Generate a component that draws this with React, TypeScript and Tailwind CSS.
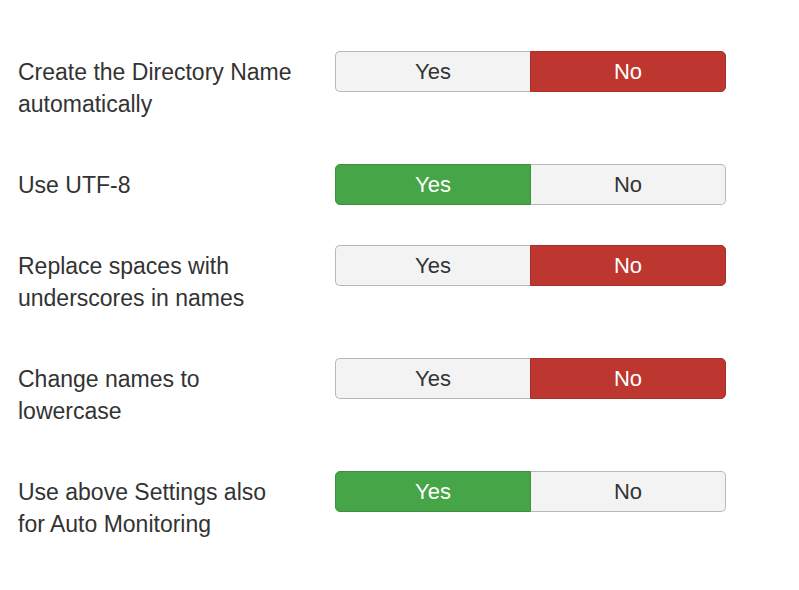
const rows = [
  { label: "Create the Directory Name automatically", value: false },
  { label: "Use UTF-8", value: true },
  { label: "Replace spaces with underscores in names", value: false },
  { label: "Change names to lowercase", value: false },
  { label: "Use above Settings also for Auto Monitoring", value: true },
];

function Toggle({ value }: { value: boolean }) {
  return (
    <div className="flex h-[41px] w-[391px] shrink-0 text-[22px] leading-none">
      <div
        className={`flex flex-1 items-center justify-center rounded-l-[5px] border ${
          value
            ? "border-[#3d8f3d] bg-[#46a546] text-white"
            : "border-[#b8b8b8] border-r-0 bg-[#f3f3f3] text-[#333]"
        }`}
      >
        Yes
      </div>
      <div
        className={`flex flex-1 items-center justify-center rounded-r-[5px] border ${
          value
            ? "border-[#b8b8b8] border-l-0 bg-[#f3f3f3] text-[#333]"
            : "border-[#a82f29] bg-[#bd362f] text-white"
        }`}
      >
        No
      </div>
    </div>
  );
}

export default function App() {
  return (
    <div className="min-h-[590px] bg-white pt-[51px] pl-[18px] font-['Liberation_Sans',Arial,sans-serif] text-[#333]">
      {rows.map((r) => (
        <div key={r.label} className="mb-[40px] flex items-start">
          <div className="w-[317px] shrink-0 pt-[5px] pb-[4px] pr-[40px] text-[23px] leading-[32px]">
            {r.label}
          </div>
          <Toggle value={r.value} />
        </div>
      ))}
    </div>
  );
}
